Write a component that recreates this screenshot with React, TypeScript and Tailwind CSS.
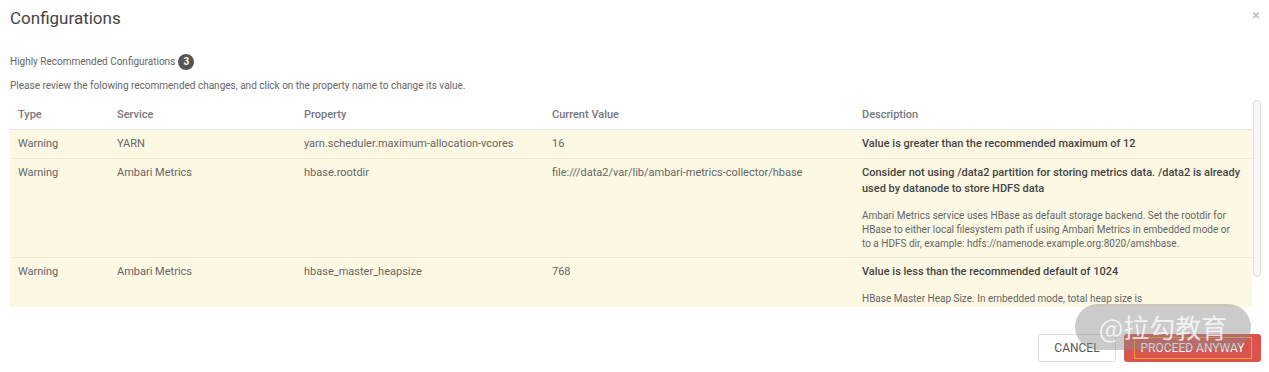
import React from "react";

const rows = [
  {
    type: "Warning",
    service: "YARN",
    property: "yarn.scheduler.maximum-allocation-vcores",
    value: "16",
    bold: "Value is greater than the recommended maximum of 12",
    desc: null as React.ReactNode,
  },
  {
    type: "Warning",
    service: "Ambari Metrics",
    property: "hbase.rootdir",
    value: "file:///data2/var/lib/ambari-metrics-collector/hbase",
    bold: "Consider not using /data2 partition for storing metrics data. /data2 is already used by datanode to store HDFS data",
    desc: "Ambari Metrics service uses HBase as default storage backend. Set the rootdir for HBase to either local filesystem path if using Ambari Metrics in embedded mode or to a HDFS dir, example: hdfs://namenode.example.org:8020/amshbase." as React.ReactNode,
  },
  {
    type: "Warning",
    service: "Ambari Metrics",
    property: "hbase_master_heapsize",
    value: "768",
    bold: "Value is less than the recommended default of 1024",
    desc: (
      <>
        HBase Master Heap Size. In embedded mode, total heap size is
        <br />
        sum of master and regionserver heap sizes.
      </>
    ) as React.ReactNode,
  },
];

export default function App() {
  return (
    <div className="relative w-[1269px] h-[372px] overflow-hidden bg-white font-['Roboto',sans-serif] text-[#666]">
      <div className="flex items-start justify-between pl-[10px] pr-[9px] pt-[8px]">
        <div className="text-[17px] leading-[20px] text-[#444]">Configurations</div>
        <div className="text-[15px] leading-[13px] text-[#bbb] pt-[1px]">×</div>
      </div>

      <div className="px-[10px] mt-[26px] flex items-center text-[10px] leading-[16px]">
        <span>Highly Recommended Configurations</span>
        <span className="ml-[3px] w-[16px] h-[16px] rounded-full bg-[#555] text-white text-[10px] font-bold flex items-center justify-center leading-none">
          3
        </span>
      </div>
      <div className="px-[10px] mt-[8px] text-[10px] leading-[15px]">
        Please review the folowing recommended changes, and click on the property name to change its value.
      </div>

      <div className="relative mt-[8px] ml-[10px] w-[1242px] h-[206px] overflow-hidden">
        <table className="w-full table-fixed border-collapse text-[11px] leading-[15px]">
          <colgroup>
            <col className="w-[99px]" />
            <col className="w-[187px]" />
            <col className="w-[248px]" />
            <col className="w-[310px]" />
            <col />
          </colgroup>
          <thead>
            <tr className="border-b border-[#e6e6e6] text-left">
              <th className="font-medium text-[#777] px-[8px] pt-[6px] pb-[6px] h-[28px]">Type</th>
              <th className="font-medium text-[#777] px-[8px] pt-[6px] pb-[6px]">Service</th>
              <th className="font-medium text-[#777] px-[8px] pt-[6px] pb-[6px]">Property</th>
              <th className="font-medium text-[#777] px-[8px] pt-[6px] pb-[6px]">Current Value</th>
              <th className="font-medium text-[#777] px-[8px] pt-[6px] pb-[6px]">Description</th>
            </tr>
          </thead>
          <tbody className="leading-[16px]">
            {rows.map((r, i) => (
              <tr key={i} className="bg-[#fcf8e3] border-b border-[#efeadb] align-top">
                <td className="px-[8px] py-[6px]">{r.type}</td>
                <td className="px-[8px] py-[6px]">{r.service}</td>
                <td className="px-[8px] py-[6px]">{r.property}</td>
                <td className="px-[8px] py-[6px]">{r.value}</td>
                <td className="pl-[8px] pr-[8px] py-[6px]">
                  <div className="font-medium text-[#444]">{r.bold}</div>
                  {r.desc && (
                    <div className="mt-[12px] mr-[10px] text-[10px] leading-[14px] text-[#666]">{r.desc}</div>
                  )}
                </td>
              </tr>
            ))}
          </tbody>
        </table>
      </div>

      <div className="absolute left-[1253px] top-[100px] w-[8px] h-[177px] rounded-full border border-[#ddd] bg-[#f7f7f7]" />

      <div className="flex justify-end gap-[8px] pr-[8px] mt-[27px]">
        <button className="w-[78px] h-[28px] rounded-[3px] border border-[#ddd] bg-white text-[12px] text-[#555] uppercase">
          Cancel
        </button>
        <button className="w-[137px] h-[28px] rounded-[3px] bg-[#d9534f] text-white text-[12px] uppercase flex items-center justify-center">
          <span className="border border-[#f0a030] px-[6px] leading-[20px] w-[118px]">Proceed Anyway</span>
        </button>
      </div>

      <div className="absolute left-[1075px] top-[304px] w-[176px] h-[46px] rounded-full bg-[rgba(140,140,140,0.45)] flex items-center justify-center text-[26px] leading-none text-[rgba(255,255,255,0.75)] font-['Noto_Sans_CJK_SC',sans-serif]">
        @拉勾教育
      </div>
    </div>
  );
}
